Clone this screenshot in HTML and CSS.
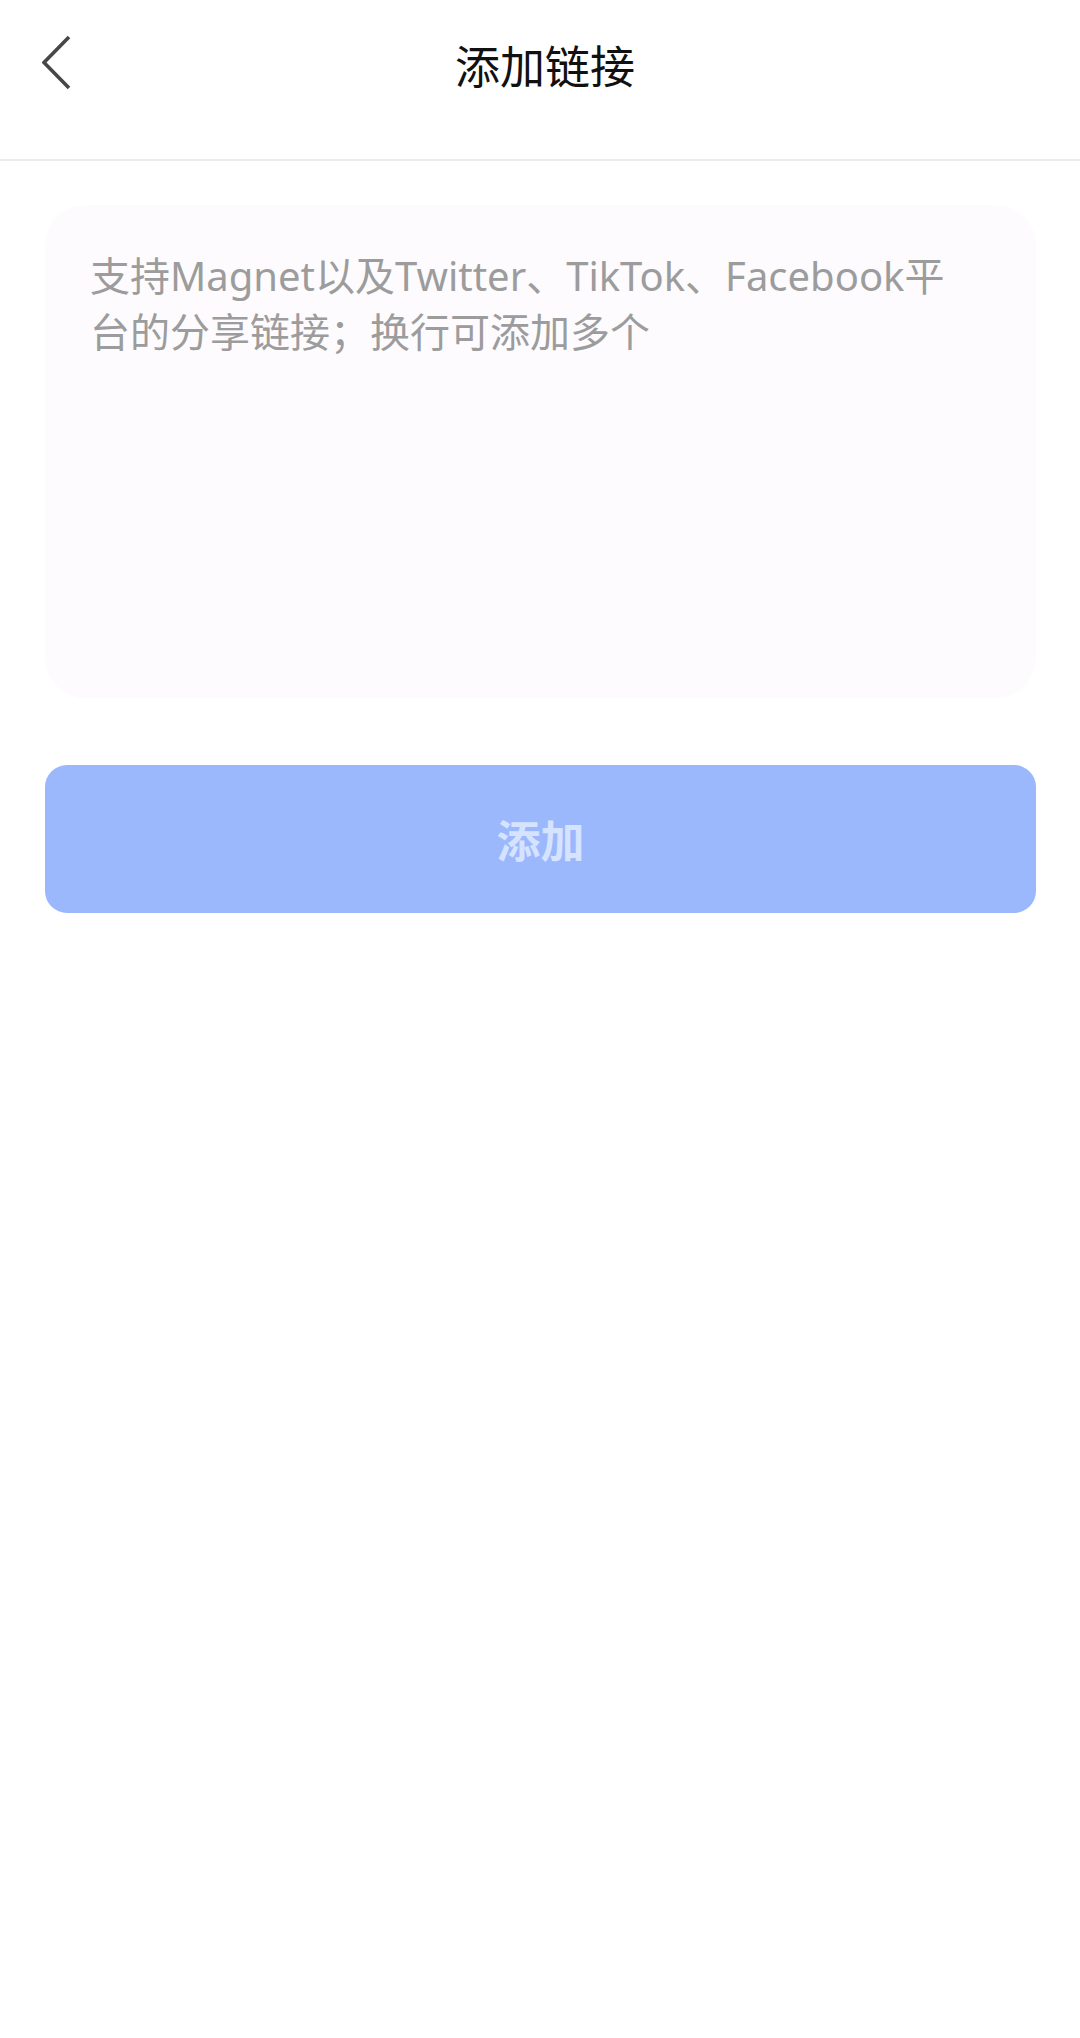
FILE: index.html
```html
<!DOCTYPE html>
<html lang="zh-CN">
<head>
<meta charset="utf-8">
<title>添加链接</title>
<link rel="stylesheet" href="styles.css">
</head>
<body>
<header class="nav">
  <button class="back" aria-label="返回">
    <svg width="30" height="58" viewBox="0 0 30 58" fill="none">
      <path d="M27 2 L2 27.5 L27 53" stroke="#474747" stroke-width="3.6" stroke-linecap="butt" stroke-linejoin="miter"/>
    </svg>
  </button>
  <h1 class="title">添加链接</h1>
  <span class="spacer"></span>
</header>
<main class="content">
  <div class="card">
    <textarea class="links" placeholder="支持Magnet以及Twitter、TikTok、Facebook平&#10;台的分享链接；换行可添加多个"></textarea>
  </div>
  <button class="submit">添加</button>
</main>
</body>
</html>
```
FILE: styles.css
```css
html, body {
  margin: 0;
  padding: 0;
  background: #ffffff;
}
body {
  width: 1080px;
  min-height: 2038px;
  font-family: "Noto Sans", "Noto Sans CJK SC", sans-serif;
}
.nav {
  display: grid;
  grid-template-columns: 1fr auto 1fr;
  align-items: center;
  box-sizing: border-box;
  height: 161px;
  padding-bottom: 31px;
  border-bottom: 2px solid #ececec;
}
.back {
  justify-self: start;
  margin-left: 42px;
  padding: 0;
  border: 0;
  background: none;
  display: flex;
  align-items: center;
}
.title {
  margin: 0;
  padding-left: 10px;
  font-family: "Noto Sans CJK SC", sans-serif;
  font-size: 45px;
  font-weight: 400;
  color: #111111;
  line-height: 1;
}
.content {
  display: flex;
  flex-direction: column;
  padding: 0 44px 0 45px;
}
.card {
  margin-top: 44px;
  height: 493px;
  background: #fdfbfe;
  border-radius: 40px;
  box-sizing: border-box;
  padding: 43px 40px 40px 45px;
  display: flex;
}
.links {
  flex: 1;
  border: 0;
  outline: none;
  resize: none;
  background: transparent;
  padding: 0;
  margin: 0;
  font-family: "Noto Sans", "Noto Sans CJK SC", sans-serif;
  font-size: 40px;
  line-height: 56px;
  color: #333333;
  white-space: pre-wrap;
  overflow: hidden;
}
.links::placeholder {
  color: #9c9c9c;
  opacity: 1;
}
.submit {
  margin-top: 67px;
  height: 148px;
  border: 0;
  border-radius: 22px;
  background: #9cb8fd;
  color: #d5e3ff;
  font-family: "Noto Sans CJK SC", sans-serif;
  font-size: 44px;
  font-weight: 700;
  padding: 0;
}
```
